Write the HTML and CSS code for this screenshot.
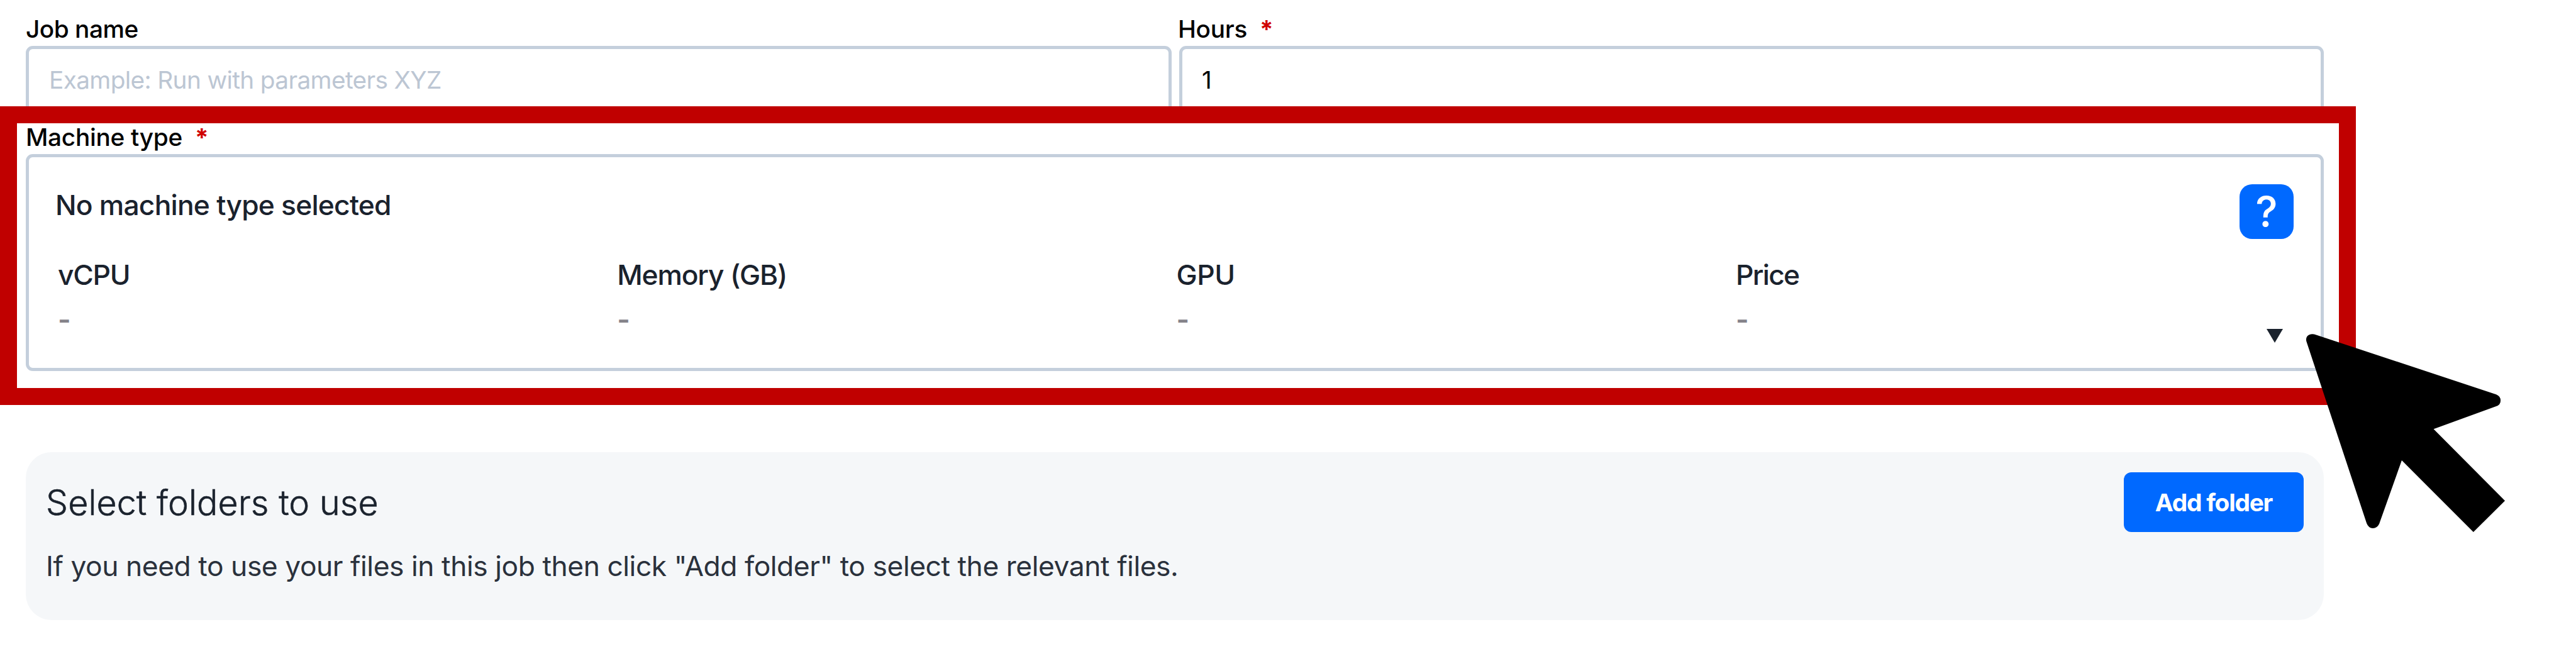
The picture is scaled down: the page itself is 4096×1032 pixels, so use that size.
FILE: index.html
```html
<!DOCTYPE html>
<html lang="en">
<head>
<meta charset="utf-8">
<title>New job</title>
<link rel="stylesheet" href="styles.css">
</head>
<body>
<main class="form">
  <div class="row">
    <div class="field">
      <label class="label label-job">Job name</label>
      <div class="input placeholder">Example: Run with parameters XYZ</div>
    </div>
    <div class="field">
      <label class="label label-hours">Hours<span class="required">*</span></label>
      <div class="input hours">1</div>
    </div>
  </div>
  <section class="field machine-field">
    <label class="label">Machine type<span class="required">*</span></label>
    <div class="machine">
      <div class="machine-title">No machine type selected</div>
      <div class="specs">
        <div class="spec"><div class="spec-name cpu">vCPU</div><div class="spec-value">-</div></div>
        <div class="spec"><div class="spec-name memory">Memory (GB)</div><div class="spec-value">-</div></div>
        <div class="spec"><div class="spec-name">GPU</div><div class="spec-value">-</div></div>
        <div class="spec"><div class="spec-name price">Price</div><div class="spec-value">-</div></div>
      </div>
      <button class="help">?</button>
      <svg class="caret" viewBox="0 0 26 22"><path d="M0 0H26L13 22Z"/></svg>
    </div>
  </section>
  <section class="folders">
    <div class="folders-head">
      <h2 class="folders-title">Select folders to use</h2>
      <button class="add">Add folder</button>
    </div>
    <p class="folders-text">If you need to use your files in this job then click "Add folder" to select the relevant files.</p>
  </section>
</main>
<div class="highlight"></div>
<svg class="cursor" viewBox="3699 534 325 323"><path d="M3718 537.5L4007 633.2Q4014 636 4014 642.9Q4014 649.5 4007 652.2L3906.5 688.7L4021 803.7L3970.4 854L3855.4 739L3819.2 840.9Q3816 847.8 3809 847.8Q3802 847.8 3799 839.8L3702.5 548.5C3700 540 3707 533.5 3718 537.5Z"/></svg>
</body>
</html>
```
FILE: styles.css
```css
* { box-sizing: border-box; }

body {
  margin: 0;
  width: 4096px;
  height: 1032px;
  overflow: hidden;
  background: #fff;
  color: #1a222d;
  font-family: Inter, "Liberation Sans", sans-serif;
  position: relative;
}

button { border: 0; padding: 0; font-family: inherit; color: #fff; background: #0069ff; }

.form { width: 3695px; padding: 19px 0 0 41px; }

.row { display: grid; grid-template-columns: 1822px 1820px; column-gap: 12px; }

.label {
  display: block;
  height: 54px;
  font-size: 38.8px;
  line-height: 54px;
  font-weight: 500;
  letter-spacing: -0.3px;
  color: #000;
}
.label-job { letter-spacing: -0.5px; }
.label-hours { margin-left: -2px; }

.required { margin-left: 20px; color: #d00000; font-weight: 700; }

.input {
  height: 107px;
  padding-left: 32px;
  border: 5px solid #c4cfdc;
  border-radius: 11px;
  font-size: 38.8px;
  line-height: 97px;
  color: #000;
}
.hours { padding-left: 31px; }
.placeholder { color: #bcc6d3; letter-spacing: -0.65px; }

.machine-field { margin-top: 11px; }

.machine {
  position: relative;
  height: 345px;
  padding: 49px 0 0 42px;
  border: 5px solid #c4cfdc;
  border-radius: 11px;
}

.machine-title {
  font-size: 44.4px;
  line-height: 54px;
  font-weight: 500;
  letter-spacing: -0.8px;
}

.specs {
  display: grid;
  grid-template-columns: repeat(4, 889.3px);
  margin: 57px 0 0 4px;
}

.spec-name {
  font-size: 44.4px;
  line-height: 54px;
  font-weight: 500;
  letter-spacing: -0.5px;
}
.cpu { letter-spacing: -1.3px; }
.memory { letter-spacing: -1.2px; }
.price { letter-spacing: -1.7px; }

.spec-value {
  margin-top: 17px;
  font-size: 44.4px;
  line-height: 54px;
  font-weight: 600;
  color: #85838a;
}

.help {
  position: absolute;
  top: 43px;
  right: 43px;
  width: 86px;
  height: 87px;
  border-radius: 20px;
  font-size: 67px;
  line-height: 83px;
  font-weight: 500;
}

.caret {
  position: absolute;
  top: 273px;
  right: 60px;
  width: 26px;
  height: 22px;
  fill: #1a222d;
}

.folders {
  height: 267px;
  margin-top: 129px;
  padding: 32px 32px 0;
  border-radius: 41px;
  background: #f5f7f9;
}

.folders-head { display: flex; justify-content: space-between; align-items: center; }

.folders-title {
  margin: 0;
  font-size: 55.5px;
  font-weight: 300;
  letter-spacing: 0.08px;
  -webkit-text-stroke: 0.6px #1a222d;
}

.add {
  width: 286px;
  height: 95px;
  border-radius: 12px;
  font-size: 38.8px;
  font-weight: 700;
  letter-spacing: -1.2px;
}

.folders-text {
  margin: 27px 0 0;
  font-size: 44.4px;
  line-height: 54px;
  letter-spacing: -0.466px;
  color: #2a313c;
}

.highlight {
  position: absolute;
  left: 0;
  top: 169px;
  width: 3746px;
  height: 475px;
  border: 27px solid #c00000;
}

.cursor {
  position: absolute;
  left: 3664px;
  top: 529px;
  width: 322px;
  height: 320px;
}
```
